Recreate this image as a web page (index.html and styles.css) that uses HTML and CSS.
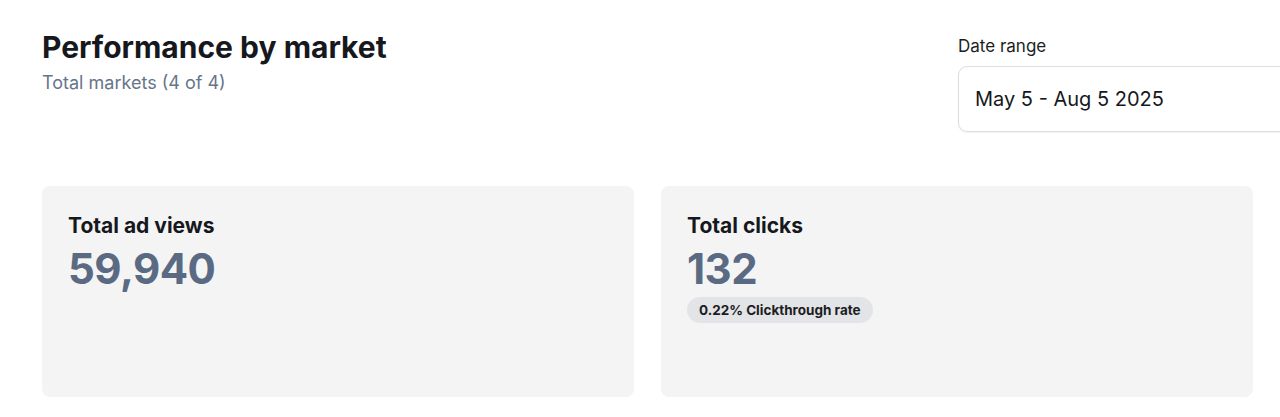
FILE: index.html
```html
<!DOCTYPE html>
<html lang="en">
<head>
<meta charset="utf-8">
<title>Performance by market</title>
<link rel="stylesheet" href="styles.css">
</head>
<body>
<main class="page">
  <header class="header">
    <div class="heading">
      <h1 class="title">Performance by market</h1>
      <p class="subtitle">Total markets (4 of 4)</p>
    </div>
    <div class="date-range">
      <label class="date-label">Date range</label>
      <div class="date-input">May 5 - Aug 5 2025</div>
    </div>
  </header>
  <section class="cards">
    <div class="card">
      <h2 class="card-title">Total ad views</h2>
      <div class="card-value">59,940</div>
    </div>
    <div class="card">
      <h2 class="card-title">Total clicks</h2>
      <div class="card-value">132</div>
      <span class="badge">0.22% Clickthrough rate</span>
    </div>
  </section>
</main>
</body>
</html>
```
FILE: styles.css
```css
* { box-sizing: border-box; }
html, body { margin: 0; padding: 0; background: #ffffff; }
body {
  font-family: Inter, "Noto Sans", "Liberation Sans", sans-serif;
  color: #16181d;
  overflow: hidden;
}
.page {
  padding: 29px 27px 0 42px;
  width: 1280px;
}
.header {
  display: flex;
  justify-content: space-between;
  align-items: flex-start;
}
.title {
  margin: 0;
  font-size: 30px;
  font-weight: 700;
  line-height: 36px;
  color: #16181d;
}
.subtitle {
  margin: 6px 0 0;
  font-size: 18px;
  line-height: 24px;
  color: #66758a;
}
.date-range {
  width: 295px;
  padding-top: 6px;
}
.date-label {
  display: block;
  font-size: 17px;
  line-height: 22px;
  color: #1c1e22;
}
.date-input {
  margin-top: 9px;
  width: 340px;
  height: 66px;
  border: 1px solid #dcdde0;
  border-radius: 9px;
  padding: 0 16px;
  display: flex;
  align-items: center;
  font-size: 20px;
  color: #16181d;
  box-shadow: 0 1px 2px rgba(0,0,0,0.05);
}
.cards {
  margin-top: 54px;
  display: grid;
  grid-template-columns: 1fr 1fr;
  gap: 27px;
}
.card {
  background: #f4f4f4;
  border-radius: 8px;
  height: 211px;
  padding: 27px 26px;
  display: flex;
  flex-direction: column;
  align-items: flex-start;
}
.card-title {
  margin: 0;
  font-size: 21px;
  font-weight: 700;
  line-height: 26px;
  color: #16181d;
}
.card-value {
  margin-top: 4px;
  font-size: 42px;
  font-weight: 700;
  line-height: 52px;
  color: #5b6a83;
  letter-spacing: -0.5px;
}
.badge {
  margin-top: 2px;
  background: #e2e4e7;
  border-radius: 13px;
  height: 26px;
  padding: 0 12px;
  display: flex;
  align-items: center;
  font-size: 13.5px;
  font-weight: 700;
  color: #1c1e22;
}
```
